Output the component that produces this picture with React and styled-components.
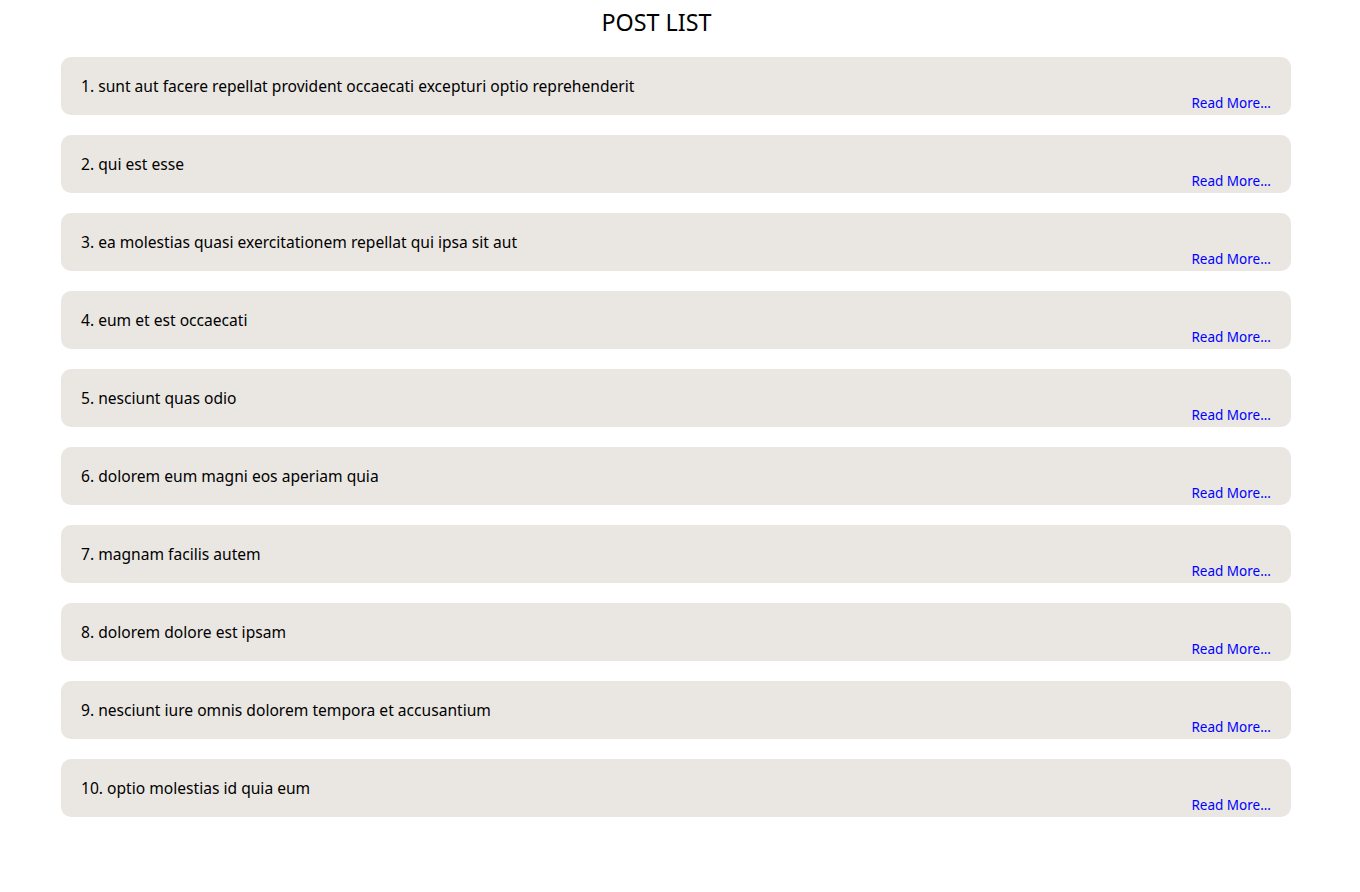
import React from "react";
import styled, { createGlobalStyle } from "styled-components";

const Global = createGlobalStyle`
  html, body { margin: 0; padding: 0; background: #fff; }
  body { font-family: "Noto Sans", "Open Sans", sans-serif; color: #000; }
`;

const Page = styled.div`
  width: 1360px;
  padding: 0 0 40px;
  box-sizing: border-box;
`;

const Title = styled.h1`
  width: 1313px;
  margin: 0;
  padding-top: 8px;
  height: 57px;
  box-sizing: border-box;
  text-align: center;
  font-size: 23.3px;
  font-weight: 400;
  line-height: 28px;
`;

const List = styled.div`
  display: flex;
  flex-direction: column;
  gap: 20px;
  margin-left: 61px;
  width: 1230px;
`;

const Card = styled.div`
  background: #eae7e3;
  border-radius: 10px;
  height: 58px;
  box-sizing: border-box;
  padding: 18px 20px 0;
  display: flex;
  flex-direction: column;
`;

const PostTitle = styled.div`
  font-size: 15.6px;
  line-height: 22px;
`;

const ReadMore = styled.a`
  align-self: flex-end;
  font-size: 13.5px;
  line-height: 16px;
  margin-top: -2px;
  color: #0000ff;
  text-decoration: none;
`;

const posts = [
  "sunt aut facere repellat provident occaecati excepturi optio reprehenderit",
  "qui est esse",
  "ea molestias quasi exercitationem repellat qui ipsa sit aut",
  "eum et est occaecati",
  "nesciunt quas odio",
  "dolorem eum magni eos aperiam quia",
  "magnam facilis autem",
  "dolorem dolore est ipsam",
  "nesciunt iure omnis dolorem tempora et accusantium",
  "optio molestias id quia eum",
];

export default function App() {
  return (
    <>
      <Global />
      <Page>
        <Title>POST LIST</Title>
        <List>
          {posts.map((t, i) => (
            <Card key={i}>
              <PostTitle>
                {i + 1}. {t}
              </PostTitle>
              <ReadMore href="#">Read More...</ReadMore>
            </Card>
          ))}
        </List>
      </Page>
    </>
  );
}
